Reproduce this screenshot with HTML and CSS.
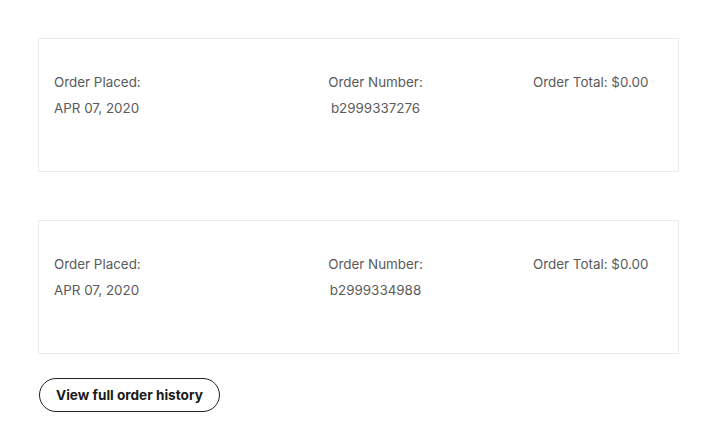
FILE: index.html
```html
<!DOCTYPE html>
<html>
<head>
<meta charset="utf-8">
<link rel="stylesheet" href="styles.css">
</head>
<body>
<div class="page">
  <div class="order-card">
    <div class="col col-placed">
      <div class="line">Order Placed:</div>
      <div class="line">APR 07, 2020</div>
    </div>
    <div class="col col-number">
      <div class="line">Order Number:</div>
      <div class="line">b2999337276</div>
    </div>
    <div class="col col-total">
      <div class="line">Order Total: $0.00</div>
    </div>
  </div>
  <div class="order-card">
    <div class="col col-placed">
      <div class="line">Order Placed:</div>
      <div class="line">APR 07, 2020</div>
    </div>
    <div class="col col-number">
      <div class="line">Order Number:</div>
      <div class="line">b2999334988</div>
    </div>
    <div class="col col-total">
      <div class="line">Order Total: $0.00</div>
    </div>
  </div>
  <div class="actions">
    <button class="history-btn">View full order history</button>
  </div>
</div>
</body>
</html>
```
FILE: styles.css
```css
html, body {
  margin: 0;
  padding: 0;
  background: #ffffff;
}
body {
  font-family: Inter, "Noto Sans", "Liberation Sans", sans-serif;
  font-size: 13.4px;
  color: #5a5a5a;
}
.page {
  padding: 38px 43px 0 38px;
  display: flex;
  flex-direction: column;
}
.order-card {
  border: 1px solid #ebebeb;
  padding: 30px 15px 0 15px;
  box-sizing: border-box;
  height: 134px;
  display: grid;
  grid-template-columns: 246.5px 150px 1fr;
  align-items: start;
}
.order-card + .order-card {
  margin-top: 48px;
}
.line {
  line-height: 26px;
  white-space: nowrap;
}
.col-number {
  text-align: center;
}
.col-total {
  text-align: left;
  padding-left: 82.5px;
}
.actions {
  margin-top: 24px;
  display: flex;
}
.history-btn {
  font-family: Inter, "Noto Sans", "Liberation Sans", sans-serif;
  font-size: 13.6px;
  font-weight: 700;
  color: #1a1a1a;
  background: #ffffff;
  border: 1px solid #222222;
  border-radius: 17px;
  height: 34px;
  padding: 0 16px;
  margin-left: 1px;
  cursor: pointer;
}
```
